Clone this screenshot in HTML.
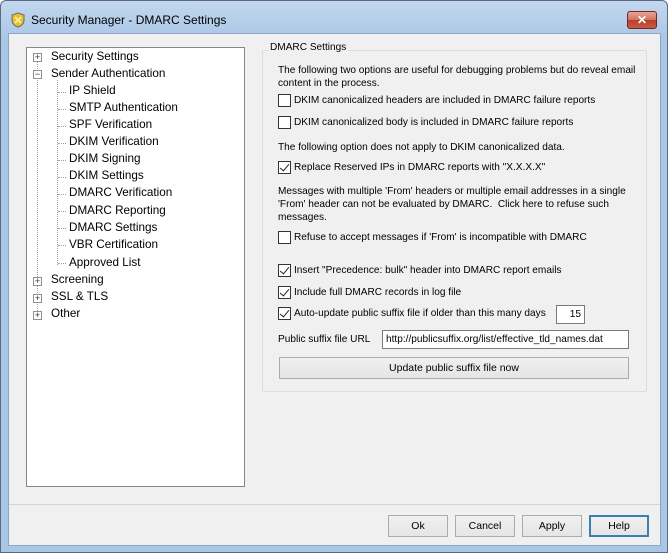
<!DOCTYPE html>
<html><head><style>
*{margin:0;padding:0;box-sizing:border-box}
body{width:670px;height:554px;background:#fff;font-family:"Liberation Sans",sans-serif;font-size:10.1px;color:#000;position:relative;overflow:hidden}
.frame{position:absolute;left:0;top:0;width:668px;height:553px;border:1px solid #5a6b80;border-radius:6px 6px 0 0;background:linear-gradient(#c3d7ee,#a9c6e6 40px,#a9c6e6);}
.title{position:absolute;left:31px;top:13px;font-size:12px;color:#000}
.close{position:absolute;left:627px;top:11px;width:30px;height:18px;border:1px solid #6b2a24;border-radius:3px;background:linear-gradient(#e8a597,#d0715f 50%,#b8402c 51%,#c85a44);color:#fff;font-weight:bold;text-align:center;line-height:16px;font-size:12px}
.client{position:absolute;left:8px;top:33px;width:653px;height:513px;background:#f0f0f0;border:1px solid #8ea6c4}
.a{position:absolute;white-space:nowrap}
.t{font-size:11.7px}
.tree{position:absolute;left:26px;top:47px;width:219px;height:440px;background:#fff;border:1px solid #828790}
.exp{position:absolute;width:9px;height:9px;border:1px solid #919191;background:#fff;font-size:9px;line-height:7px;text-align:center;color:#333}
.grp{position:absolute;left:262px;top:50px;width:385px;height:342px;border:1px solid #d5dfe5;border-radius:2px}
.cb{position:absolute;width:13px;height:13px;border:1px solid #333;background:#fff}
.cb.k::after{content:"";position:absolute;left:3px;top:0px;width:4px;height:8px;border:solid #222;border-width:0 1.5px 1.5px 0;transform:rotate(40deg)}
.btn{position:absolute;height:22px;border:1px solid #acacac;background:linear-gradient(#f0f0f0,#e5e5e5);text-align:center;line-height:20px;font-size:10.5px}
.inp{position:absolute;background:#fff;border:1px solid #7a7a7a;height:19px;line-height:17px;padding:0 3px}
.dot{position:absolute;border-left:1px dotted #a0a0a0}
.hd{position:absolute;border-top:1px dotted #a0a0a0;width:8px}
</style></head><body>
<div class="frame"></div>
<svg class="a" style="left:10px;top:12px" width="16" height="16" viewBox="0 0 16 16"><path d="M8 1 L14 3 L14 8 C14 12 11 14 8 15 C5 14 2 12 2 8 L2 3 Z" fill="#e8c030" stroke="#6a6a6a"/><path d="M5 5 L11 11 M11 5 L5 11" stroke="#fff6a0" stroke-width="1.5"/></svg>
<div class="title">Security Manager - DMARC Settings</div>
<div class="close">✕</div>
<div class="client"></div>
<div class="tree"></div>
<div class="dot" style="left:37px;top:62px;height:255px"></div>
<div class="dot" style="left:57px;top:80px;height:185px"></div>
<div class="exp" style="left:33px;top:53px">+</div>
<div class="exp" style="left:33px;top:70px">−</div>
<div class="exp" style="left:33px;top:277px">+</div>
<div class="exp" style="left:33px;top:294px">+</div>
<div class="exp" style="left:33px;top:311px">+</div>
<div class="a t" style="left:51px;top:50px">Security Settings</div>
<div class="a t" style="left:51px;top:67px">Sender Authentication</div>
<div class="hd" style="left:58px;top:92px"></div><div class="a t" style="left:69px;top:84px">IP Shield</div>
<div class="hd" style="left:58px;top:109px"></div><div class="a t" style="left:69px;top:101px">SMTP Authentication</div>
<div class="hd" style="left:58px;top:126px"></div><div class="a t" style="left:69px;top:118px">SPF Verification</div>
<div class="hd" style="left:58px;top:143px"></div><div class="a t" style="left:69px;top:135px">DKIM Verification</div>
<div class="hd" style="left:58px;top:160px"></div><div class="a t" style="left:69px;top:152px">DKIM Signing</div>
<div class="hd" style="left:58px;top:177px"></div><div class="a t" style="left:69px;top:169px">DKIM Settings</div>
<div class="hd" style="left:58px;top:194px"></div><div class="a t" style="left:69px;top:186px">DMARC Verification</div>
<div class="hd" style="left:58px;top:211px"></div><div class="a t" style="left:69px;top:204px">DMARC Reporting</div>
<div class="hd" style="left:58px;top:228px"></div><div class="a t" style="left:69px;top:221px">DMARC Settings</div>
<div class="hd" style="left:58px;top:245px"></div><div class="a t" style="left:69px;top:238px">VBR Certification</div>
<div class="hd" style="left:58px;top:263px"></div><div class="a t" style="left:69px;top:256px">Approved List</div>
<div class="a t" style="left:51px;top:273px">Screening</div>
<div class="a t" style="left:51px;top:290px">SSL &amp; TLS</div>
<div class="a t" style="left:51px;top:307px">Other</div>

<div class="grp"></div>
<div class="a" style="left:268px;top:42px;background:#f0f0f0;padding:0 2px">DMARC Settings</div>
<div class="a" style="left:278px;top:64px;line-height:13px">The following two options are useful for debugging problems but do reveal email<br>content in the process.</div>
<div class="cb" style="left:278px;top:94px"></div><div class="a" style="left:294px;top:95px">DKIM canonicalized headers are included in DMARC failure reports</div>
<div class="cb" style="left:278px;top:116px"></div><div class="a" style="left:294px;top:117px">DKIM canonicalized body is included in DMARC failure reports</div>
<div class="a" style="left:278px;top:142px">The following option does not apply to DKIM canonicalized data.</div>
<div class="cb k" style="left:278px;top:161px"></div><div class="a" style="left:294px;top:162px">Replace Reserved IPs in DMARC reports with "X.X.X.X"</div>
<div class="a" style="left:278px;top:185px;line-height:13px">Messages with multiple 'From' headers or multiple email addresses in a single<br>'From' header can not be evaluated by DMARC.&nbsp; Click here to refuse such<br>messages.</div>
<div class="cb" style="left:278px;top:231px"></div><div class="a" style="left:294px;top:232px">Refuse to accept messages if 'From' is incompatible with DMARC</div>
<div class="cb k" style="left:278px;top:264px"></div><div class="a" style="left:294px;top:265px">Insert "Precedence: bulk" header into DMARC report emails</div>
<div class="cb k" style="left:278px;top:286px"></div><div class="a" style="left:294px;top:287px">Include full DMARC records in log file</div>
<div class="cb k" style="left:278px;top:307px"></div><div class="a" style="left:294px;top:308px">Auto-update public suffix file if older than this many days</div>
<div class="inp" style="left:556px;top:305px;width:29px;text-align:right">15</div>
<div class="a" style="left:278px;top:334px">Public suffix file URL</div>
<div class="inp" style="left:382px;top:330px;width:247px">http://publicsuffix.org/list/effective_tld_names.dat</div>
<div class="btn" style="left:279px;top:357px;width:350px">Update public suffix file now</div>

<div class="a" style="left:9px;top:504px;width:651px;border-top:1px solid #d5d5d5"></div>
<div class="btn" style="left:388px;top:515px;width:60px">Ok</div>
<div class="btn" style="left:455px;top:515px;width:60px">Cancel</div>
<div class="btn" style="left:522px;top:515px;width:60px">Apply</div>
<div class="btn" style="left:589px;top:515px;width:60px;border:2px solid #3c7fb1;line-height:18px">Help</div>
</body></html>
